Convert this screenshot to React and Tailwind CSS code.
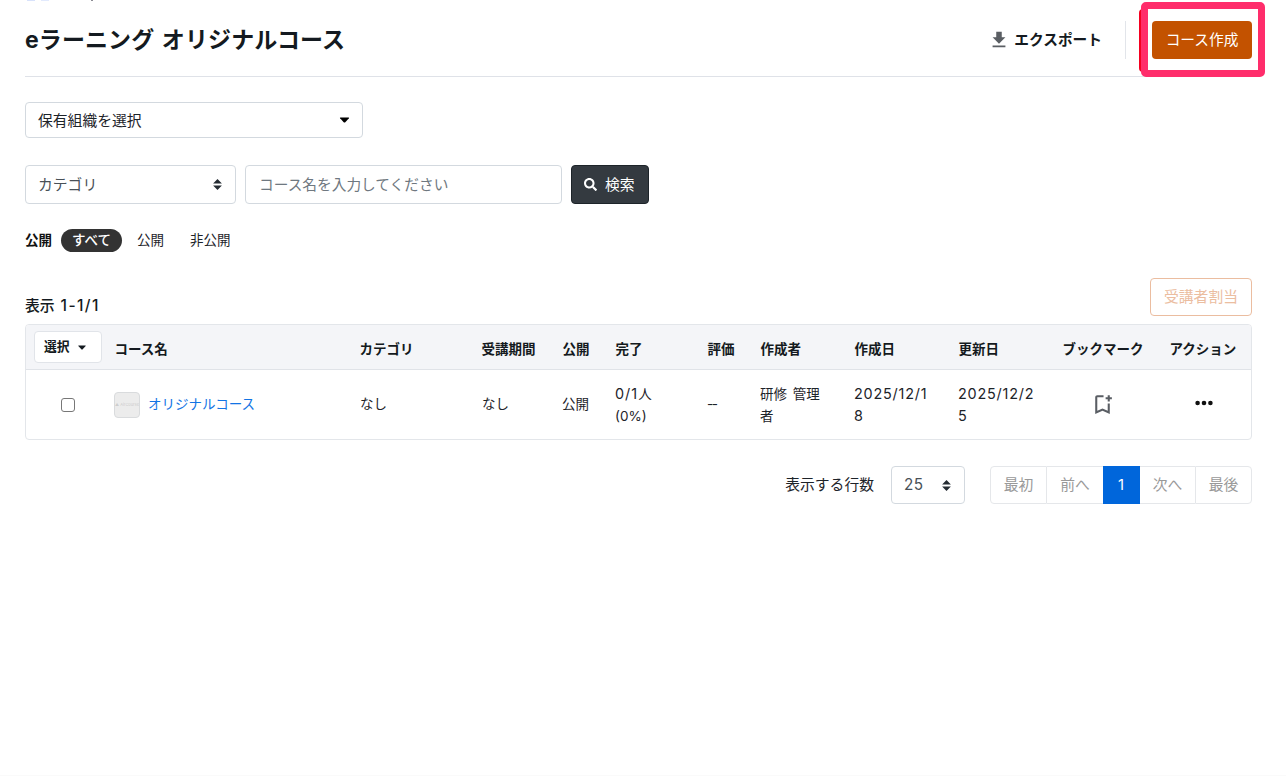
import React from "react";
import { MdOutlineBookmarkAdd, MdDownload } from "react-icons/md";
import { FaSearch } from "react-icons/fa";

const columns = [
  ["コース名", "w-[245px]"],
  ["カテゴリ", "w-[122px]"],
  ["受講期間", "w-[81px]"],
  ["公開", "w-[53px]"],
  ["完了", "w-[92px]"],
  ["評価", "w-[53px]"],
  ["作成者", "w-[94px]"],
  ["作成日", "w-[104px]"],
  ["更新日", "w-[104px]"],
  ["ブックマーク", "w-[107px]"],
  ["アクション", "w-[81px]"],
];

function Caret({ className }) {
  return (
    <svg viewBox="0 0 10 6" className={className} fill="currentColor">
      <path d="M1 0.5h8q1 0 .4.8L5.8 5.2q-.8.8-1.6 0L.6 1.3Q0 .5 1 .5z" />
    </svg>
  );
}

function SortArrows({ className }) {
  return (
    <svg viewBox="0 0 8 10" className={className} fill="#252c33">
      <path d="M4 0L8 4.2H0zM4 10L0 5.8h8z" />
    </svg>
  );
}

function Field({ className, children }) {
  return (
    <div className={"flex items-center rounded-[4px] border border-[#d3d9df] bg-white text-[14.8px] whitespace-nowrap " + className}>
      {children}
    </div>
  );
}

export default function App() {
  return (
    <div className="relative flex h-[776px] w-[1286px] flex-col overflow-hidden border-b border-[#fafafa] bg-white pr-[34px] pl-[25px] font-['Inter','Noto_Sans_CJK_JP',sans-serif] leading-none text-[#1d2329]">
      <div className="absolute top-0 left-[27px] flex h-[2px] items-start">
        <div className="h-px w-[8px] bg-[#d8e2fb]" />
        <div className="ml-[6px] h-px w-[8px] bg-[#e2eafd]" />
        <div className="ml-[42px] h-px w-[2px] bg-[#8c8c94]" />
      </div>
      <header className="flex h-[77px] shrink-0 items-center border-b border-[#dfe2e8] pt-[3px]">
        <h1 className="pt-[2px] text-[23px] font-bold tracking-[0.1px] whitespace-nowrap text-[#141a20] [word-spacing:2px]">eラーニング オリジナルコース</h1>
        <div className="ml-auto flex items-center">
          <MdDownload className="h-[22px] w-[22px] text-[#5a5e63]" />
          <span className="ml-[4px] pt-[2px] text-[14.7px] font-bold whitespace-nowrap text-[#141a20]">エクスポート</span>
          <div className="ml-[23px] h-[38px] w-[1px] bg-[#e2e5ea]" />
          <button className="ml-[26px] h-[38px] w-[100px] rounded-[4px] bg-[#c35200] pt-[2px] text-[14.7px] text-white">コース作成</button>
        </div>
      </header>

      <Field className="mt-[25px] h-[36px] w-[338px] shrink-0 justify-between pr-[12px] pl-[12px]">
        <span className="pt-[3px]">保有組織を選択</span>
        <Caret className="h-[6px] w-[11px] text-black" />
      </Field>

      <div className="mt-[27px] flex h-[39px] shrink-0">
        <Field className="w-[211px] justify-between pr-[13px] pl-[12px] text-[#495057]">
          <span className="pt-px">カテゴリ</span>
          <SortArrows className="h-[11px] w-[9px]" />
        </Field>
        <Field className="ml-[9px] w-[317px] pl-[13px] text-[#6f7880]">
          <span className="pt-px text-[14.7px]">コース名を入力してください</span>
        </Field>
        <button className="ml-[9px] flex w-[78px] items-center rounded-[4px] border border-[#1d2429] bg-[#343a40] pl-[12px] text-[14.8px] text-white">
          <FaSearch className="h-[13px] w-[13px]" />
          <span className="ml-[8px] pt-px">検索</span>
        </button>
      </div>

      <div className="mt-[25px] flex h-[23px] shrink-0 items-center text-[13.5px] whitespace-nowrap">
        <span className="w-[36px] font-bold text-[#111]">公開</span>
        <span className="flex h-[23px] w-[61px] items-center justify-center rounded-full bg-[#333] font-medium text-white">すべて</span>
        <span className="ml-[15px] w-[53px]">公開</span>
        <span>非公開</span>
      </div>

      <div className="mt-[26px] flex h-[38px] shrink-0 items-start justify-between">
        <span className="mt-[20px] text-[14.8px] font-medium text-[#141a20]">表示 <span className="ml-[2px] text-[15.5px] tracking-[1.4px]">1-1/1</span></span>
        <button className="h-[38px] w-[102px] rounded-[4px] border border-[#ebbda0] pt-px text-[14.8px] text-[#ebbda0]">受講者割当</button>
      </div>

      <section className="mt-[8px] h-[116px] shrink-0 overflow-hidden rounded-[4px] border border-[#e3e6ea] text-[13.5px]">
        <div className="flex h-[45px] items-center border-b border-[#e0e3e8] bg-[#f4f5f8] font-bold text-[#141a20]">
          <div className="w-[88.5px] shrink-0 pl-[8px]">
            <button className="flex h-[32px] w-[68px] items-center rounded-[4px] border border-[#e1e4e9] bg-white pl-[9px] text-[12.8px]">
              選択
              <Caret className="ml-[7px] h-[5px] w-[10px]" />
            </button>
          </div>
          {columns.map(([label, width]) => (
            <span key={label} className={"shrink-0 pt-[5px] whitespace-nowrap " + width}>{label}</span>
          ))}
        </div>
        <div className="flex h-[69px] items-center">
          <div className="w-[88px] shrink-0 pl-[35px]">
            <div className="h-[14px] w-[14px] rounded-[3px] border border-[#777] bg-white" />
          </div>
          <div className="flex w-[246px] shrink-0 items-center">
            <div className="flex h-[26px] w-[26px] items-center justify-center overflow-hidden rounded-[4px] border border-[#d9dbdd] bg-[#ececec]">
              <span className="text-[4px] whitespace-nowrap text-[#cdcdcd]">▲ AirCourse</span>
            </div>
            <a className="ml-[8px] pt-px text-[#1274e4]">オリジナルコース</a>
          </div>
          <span className="w-[122px] shrink-0 pt-px">なし</span>
          <span className="w-[80px] shrink-0 pt-px">なし</span>
          <span className="w-[53px] shrink-0 pt-px">公開</span>
          <span className="w-[92px] shrink-0 leading-[22px]"><span className="text-[14.4px] tracking-[1px]">0/1</span>人<br />(0%)</span>
          <span className="w-[53px] shrink-0 tracking-[-1.5px]">--</span>
          <span className="w-[94px] shrink-0 leading-[22px] [word-spacing:2px]">研修 管理<br />者</span>
          <span className="w-[104px] shrink-0 text-[14.4px] leading-[22px] tracking-[0.8px]">2025/12/1<br />8</span>
          <span className="w-[104px] shrink-0 text-[14.4px] leading-[22px] tracking-[0.8px]">2025/12/2<br />5</span>
          <div className="flex w-[81px] shrink-0 justify-center">
            <MdOutlineBookmarkAdd className="h-[25px] w-[25px] text-[#5a5e64]" />
          </div>
          <svg viewBox="0 0 18 6" className="mb-[3px] ml-[52px] h-[6px] w-[18px]" fill="#111">
            <circle cx="2.6" cy="3" r="2.3" />
            <circle cx="9" cy="3" r="2.3" />
            <circle cx="15.4" cy="3" r="2.3" />
          </svg>
        </div>
      </section>

      <footer className="mt-[26px] flex h-[38px] shrink-0 items-center justify-end text-[14.8px] whitespace-nowrap">
        <span className="pt-px">表示する行数</span>
        <Field className="ml-[17px] h-[38px] w-[74px] justify-between pr-[13px] pl-[12px] text-[#495057]">
          <span className="text-[15.3px] tracking-[0.4px]">25</span>
          <SortArrows className="h-[11px] w-[9px]" />
        </Field>
        <nav className="ml-[25px] flex h-[38px] text-[#999]">
          <span className="flex w-[57px] items-center justify-center rounded-l-[4px] border border-[#e5e7ea] pt-px">最初</span>
          <span className="flex w-[56px] items-center justify-center border-y border-[#e5e7ea] pt-px">前へ</span>
          <span className="flex w-[37px] items-center justify-center bg-[#0066db] pr-px text-white">1</span>
          <span className="flex w-[55px] items-center justify-center border-y border-[#e5e7ea] pt-px">次へ</span>
          <span className="flex w-[57px] items-center justify-center rounded-r-[4px] border border-[#e5e7ea] pt-px">最後</span>
        </nav>
      </footer>

      <div className="absolute top-[9px] left-[1139px] h-[63px] w-[6px] rounded-l-[4px] bg-[#f50020]" />
      <div className="absolute top-[2px] left-[1141px] h-[75px] w-[124px] rounded-[5px] border-[7px] border-[#ff2d6b]" />
    </div>
  );
}
